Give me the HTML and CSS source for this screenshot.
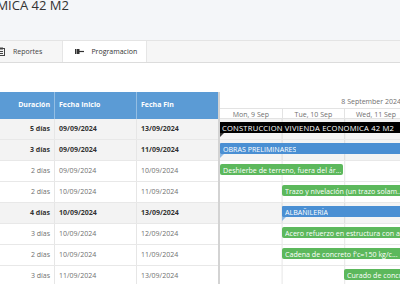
FILE: index.html
```html
<!DOCTYPE html>
<html lang="es">
<head>
  <meta charset="UTF-8">
  <meta name="viewport" content="width=device-width, initial-scale=1.0">
  <title>Programacion - Construccion Vivienda Economica 42 M2</title>
  <link rel="stylesheet" href="styles.css">
</head>
<body>
  <div class="app">
    <header class="page-head">
      <h1 class="title">CONSTRUCCION VIVIENDA ECONOMICA 42 M2</h1>
    </header>

    <nav class="tabs">
      <a class="tab tab-reports" href="#">
        <svg class="tab-icon" width="8" height="9" viewBox="0 0 8 9">
          <rect x="0.5" y="1.5" width="7" height="7" fill="none" stroke="#444" stroke-width="1"/>
          <rect x="2" y="0.5" width="4" height="2" fill="#444"/>
          <line x1="2" y1="4.5" x2="6" y2="4.5" stroke="#444" stroke-width="1"/>
          <line x1="2" y1="6.5" x2="6" y2="6.5" stroke="#444" stroke-width="1"/>
        </svg>
        <span>Reportes</span>
      </a>
      <a class="tab active" href="#">
        <svg class="tab-icon" width="9" height="7" viewBox="0 0 9 7">
          <line x1="0.5" y1="1" x2="0.5" y2="6" stroke="#333" stroke-width="1"/>
          <rect x="1.5" y="1" width="3" height="5" fill="#333"/>
          <line x1="4" y1="3.5" x2="9" y2="3.5" stroke="#333" stroke-width="1.2"/>
        </svg>
        <span>Programacion</span>
      </a>
    </nav>

    <section class="gantt">
      <div class="grid">
        <div class="grid-head">
          <div class="cell c-dur">Duración</div>
          <div class="cell c-start">Fecha Inicio</div>
          <div class="cell c-end">Fecha Fin</div>
        </div>
        <div class="grid-row summary">
          <div class="cell c-dur">5 días</div>
          <div class="cell c-start">09/09/2024</div>
          <div class="cell c-end">13/09/2024</div>
        </div>
        <div class="grid-row summary">
          <div class="cell c-dur">3 días</div>
          <div class="cell c-start">09/09/2024</div>
          <div class="cell c-end">11/09/2024</div>
        </div>
        <div class="grid-row">
          <div class="cell c-dur">2 días</div>
          <div class="cell c-start">09/09/2024</div>
          <div class="cell c-end">10/09/2024</div>
        </div>
        <div class="grid-row">
          <div class="cell c-dur">2 días</div>
          <div class="cell c-start">10/09/2024</div>
          <div class="cell c-end">11/09/2024</div>
        </div>
        <div class="grid-row summary">
          <div class="cell c-dur">4 días</div>
          <div class="cell c-start">10/09/2024</div>
          <div class="cell c-end">13/09/2024</div>
        </div>
        <div class="grid-row">
          <div class="cell c-dur">3 días</div>
          <div class="cell c-start">10/09/2024</div>
          <div class="cell c-end">12/09/2024</div>
        </div>
        <div class="grid-row">
          <div class="cell c-dur">2 días</div>
          <div class="cell c-start">10/09/2024</div>
          <div class="cell c-end">11/09/2024</div>
        </div>
        <div class="grid-row">
          <div class="cell c-dur">3 días</div>
          <div class="cell c-start">11/09/2024</div>
          <div class="cell c-end">13/09/2024</div>
        </div>
      </div>

      <div class="chart">
        <div class="scale">
          <div class="scale-week"><span>8 September 2024</span></div>
          <div class="scale-days">
            <div class="day">Mon, 9 Sep</div>
            <div class="day">Tue, 10 Sep</div>
            <div class="day">Wed, 11 Sep</div>
          </div>
        </div>
        <div class="chart-body">
          <div class="chart-row summary">
            <div class="bar bar-project" style="margin-left: 0; width: 313px;"><span class="bar-label">CONSTRUCCION VIVIENDA ECONOMICA 42 M2</span></div>
          </div>
          <div class="chart-row summary">
            <div class="bar bar-summary" style="margin-left: 0; width: 187px;"><span class="bar-label">OBRAS PRELIMINARES</span></div>
          </div>
          <div class="chart-row">
            <div class="bar bar-task" style="margin-left: 0; width: 123px;"><span class="bar-label">Deshierbe de terreno, fuera del ár...</span></div>
          </div>
          <div class="chart-row">
            <div class="bar bar-task" style="margin-left: 62px; width: 124px;"><span class="bar-label">Trazo y nivelación (un trazo solam...</span></div>
          </div>
          <div class="chart-row summary">
            <div class="bar bar-summary" style="margin-left: 62px; width: 250px;"><span class="bar-label">ALBAÑILERÍA</span></div>
          </div>
          <div class="chart-row">
            <div class="bar bar-task" style="margin-left: 62px; width: 187px;"><span class="bar-label">Acero refuerzo en estructura con al...</span></div>
          </div>
          <div class="chart-row">
            <div class="bar bar-task" style="margin-left: 62px; width: 124px;"><span class="bar-label">Cadena de concreto f'c=150 kg/c...</span></div>
          </div>
          <div class="chart-row">
            <div class="bar bar-task" style="margin-left: 124px; width: 187px;"><span class="bar-label">Curado de concreto</span></div>
          </div>
        </div>
      </div>
    </section>
  </div>
</body>
</html>
```

FILE: styles.css
```css
* {
  margin: 0;
  padding: 0;
  box-sizing: border-box;
}
body {
  font-family: 'Open Sans', 'Noto Sans', sans-serif;
  background-color: #ffffff;
  color: #333;
  overflow: hidden;
}
/* page is scrolled sideways, so the left part sits off screen */
.app {
  margin-left: -240px;
  width: 640px;
}
.page-head {
  height: 40px;
  background: #f4f6f9;
  padding-left: 27px;
}
.title {
  font-size: 13px;
  font-weight: 400;
  line-height: 11px;
  color: #333;
  white-space: nowrap;
}
.tabs {
  display: flex;
  height: 23px;
  background: #f6f6f6;
  border-top: 1px solid #e4e4e4;
  border-bottom: 1px solid #dcdcdc;
  padding-left: 225px;
}
.tab {
  display: flex;
  align-items: center;
  gap: 8px;
  padding: 0 12px;
  font-size: 7px;
  color: #444;
  text-decoration: none;
  border-right: 1px solid #e6e6e6;
}
.tab-reports {
  padding-right: 20px;
}
.tab.active {
  background: #ffffff;
  color: #333;
  gap: 7px;
  padding-right: 9px;
}
.tab-icon {
  flex: none;
}
.gantt {
  display: flex;
  margin-top: 29px;
  margin-left: 230px;
  font-size: 7px;
}
.grid {
  width: 229px;
  flex: none;
  border-right: 1px solid #d3d3d3;
}
.grid-head {
  display: flex;
  height: 27px;
  background: #5b9bd5;
  color: #ffffff;
  font-weight: 700;
}
.grid-head .cell {
  padding-bottom: 3px;
  border-right-color: rgba(255, 255, 255, 0.35);
}
.grid-row {
  display: flex;
  height: 21px;
  border-bottom: 1px solid #e8e8e8;
  color: #707070;
}
.grid-row .cell {
  padding-bottom: 1px;
}
.grid-row.summary {
  background: #f3f3f3;
  color: #333;
  font-weight: 700;
}
.cell {
  display: flex;
  align-items: center;
  padding: 0 4px;
  white-space: nowrap;
  overflow: hidden;
  border-right: 1px solid #e6e6e6;
}
.c-dur {
  width: 65px;
  justify-content: flex-end;
}
.c-start {
  width: 82px;
}
.c-end {
  width: 81px;
  border-right: none;
}
.chart {
  flex: 1;
  min-width: 0;
  overflow: hidden;
  border-left: 1px solid #d3d3d3;
}
.scale {
  height: 27px;
  border-bottom: 1px solid #e3e3e3;
  color: #707070;
}
.scale-week {
  height: 17px;
  border-bottom: 1px solid #e3e3e3;
  display: flex;
  justify-content: flex-end;
  align-items: center;
  padding-top: 3px;
  margin-right: -1px;
}
.scale-days {
  display: flex;
  height: 9px;
}
.day {
  flex: none;
  width: 62.6px;
  display: flex;
  justify-content: center;
  align-items: center;
  padding-top: 1px;
  border-right: 1px solid #e3e3e3;
}
.chart-body {
  background-image: linear-gradient(to right, transparent 61.6px, #e6e6e6 61.6px);
  background-size: 62.6px 100%;
}
.chart-row {
  height: 21px;
  border-bottom: 1px solid #e8e8e8;
  padding-top: 3px;
  white-space: nowrap;
}
.chart-row.summary {
  background: rgba(0, 0, 0, 0.045);
}
.bar {
  position: relative;
  height: 11px;
  display: flex;
  align-items: center;
  padding-left: 3px;
  font-size: 7.1px;
  color: #ffffff;
  border-radius: 2px;
}
.bar-label {
  overflow: hidden;
}
.bar-project {
  background: #000000;
  border-radius: 0;
  padding-left: 2px;
  font-size: 7.6px;
  letter-spacing: 0.2px;
}
.bar-summary {
  background: #4a8fd3;
  border-radius: 1px;
}
.bar-task {
  background: #5cb85c;
}
.bar-project::after,
.bar-summary::after {
  content: "";
  position: absolute;
  left: 0;
  top: 100%;
  border-right: 4px solid transparent;
}
.bar-project::after {
  border-top: 4px solid #333;
}
.bar-summary::after {
  border-top: 4px solid #8db8e3;
}
```
